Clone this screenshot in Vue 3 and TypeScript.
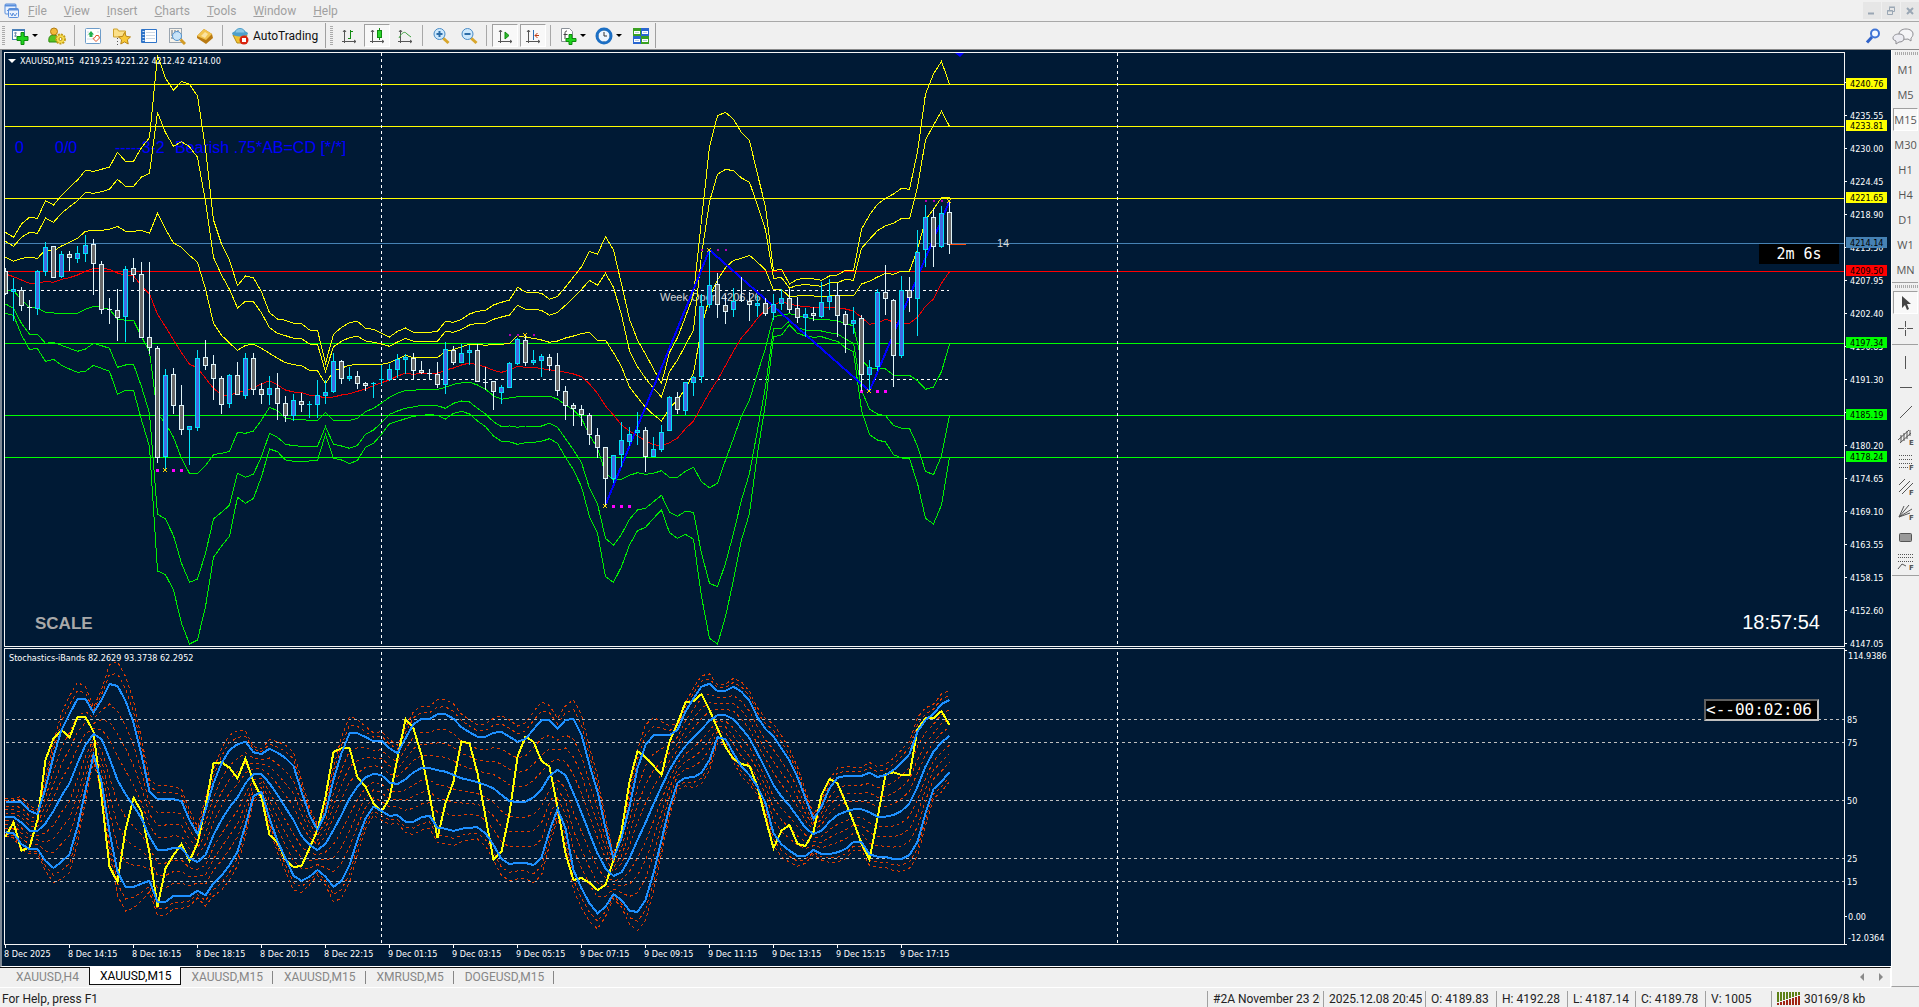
<script setup lang="ts">
interface Candle { x: number; top: number; bottom: number; high: number; low: number; bull: boolean }
interface Tag { price: string; y: number; color: string }

const STEP = 8

const menus = ['File', 'View', 'Insert', 'Charts', 'Tools', 'Window', 'Help']
const frames = ['M1', 'M5', 'M15', 'M30', 'H1', 'H4', 'D1', 'W1', 'MN']
const tabs = ['XAUUSD,H4', 'XAUUSD,M15', 'XAUUSD,M15', 'XAUUSD,M15', 'XMRUSD,M5', 'DOGEUSD,M15']
const times = ['8 Dec 2025', '8 Dec 14:15', '8 Dec 16:15', '8 Dec 18:15', '8 Dec 20:15', '8 Dec 22:15', '9 Dec 01:15',
  '9 Dec 03:15', '9 Dec 05:15', '9 Dec 07:15', '9 Dec 09:15', '9 Dec 11:15', '9 Dec 13:15', '9 Dec 15:15', '9 Dec 17:15']
const status = [
  { text: '#2A November 23 2025', width: 116 },
  { text: '2025.12.08 20:45', width: 102 },
  { text: 'O: 4189.83', width: 71 },
  { text: 'H: 4192.28', width: 71 },
  { text: 'L: 4187.14', width: 68 },
  { text: 'C: 4189.78', width: 70 },
  { text: 'V: 1005', width: 66 },
]
const title = 'XAUUSD,M15\u00a0 4219.25 4221.22 4212.42 4214.00'

const scale = ['', '4235.55', '4230.00', '4224.45', '4218.90', '4213.50', '4207.95', '4202.40', '4196.85', '4191.30',
  '', '4180.20', '4174.65', '4169.10', '4163.55', '4158.15', '4152.60', '4147.05'].map((text, k) => ({ text, y: 30 + 33 * k }))
const tags: Tag[] = [
  { price: '4240.76', y: 32, color: '#ffff00' },
  { price: '4233.81', y: 74, color: '#ffff00' },
  { price: '4221.65', y: 146, color: '#ffff00' },
  { price: '4214.14', y: 191, color: '#4682b4' },
  { price: '4209.50', y: 219, color: '#ff0000' },
  { price: '4197.34', y: 291, color: '#00ff00' },
  { price: '4185.19', y: 363, color: '#00ff00' },
  { price: '4178.24', y: 405, color: '#00ff00' },
]
const levels = [
  { text: '85', y: 70 }, { text: '75', y: 93 }, { text: '50', y: 151 }, { text: '25', y: 209 }, { text: '15', y: 232 },
]

// Candles: high, body top, body bottom, low in thirds of a pixel; 1 marks a rising bar.
const rawCandles = `205 214 282 285 0,234 267 277 363 1,262 271 319 333 0,300 322 326 390 0,210 213 326 345 1,126 141 215 228 1,
138 139 233 234 0,153 162 230 234 1,153 162 173 213 0,138 160 176 189 1,105 135 161 186 1,117 132 191 285 0,183 192 329 342 0,
294 327 331 372 0,267 331 353 423 0,198 207 350 426 1,174 205 224 246 0,186 222 413 414 0,186 411 443 462 0,438 445 773 789 0,
507 525 770 810 1,504 522 617 642 0,555 615 689 705 0,678 679 689 795 1,450 474 683 693 1,420 471 497 510 0,465 492 536 600 0,
528 534 614 642 0,522 525 611 624 1,486 525 584 585 0,459 474 587 597 1,459 474 569 585 0,549 567 584 612 0,528 565 584 615 1,
519 564 611 660 0,588 609 647 666 0,582 600 647 663 1,579 603 614 636 0,603 612 615 654 1,540 585 614 654 1,540 576 587 612 1,
459 483 575 579 1,480 483 536 552 0,501 528 536 543 1,513 528 551 567 0,546 549 557 573 0,546 549 554 594 1,495 538 540 555 1,
492 507 539 543 1,462 477 509 534 1,462 471 479 522 1,459 474 512 540 0,483 510 518 522 0,507 519 524 540 0,486 522 554 564 0,
426 447 554 582 1,438 450 488 495 0,432 459 488 489 1,435 450 458 495 1,432 450 545 546 0,501 546 551 570 0,543 544 575 630 0,
555 561 578 612 1,486 489 563 564 1,414 417 491 495 1,405 420 488 498 0,450 480 488 495 1,462 468 482 531 1,462 471 497 513 0,
459 495 572 588 0,558 573 617 660 0,609 615 626 678 0,615 627 644 678 0,639 645 704 735 0,684 705 743 774 0,741 741 836 918 0,
765 765 836 849 1,666 720 764 801 1,681 702 725 738 1,636 690 698 735 1,681 690 770 816 0,711 747 770 771 1,675 696 749 756 1,
588 591 692 693 1,576 591 629 642 0,546 546 632 645 1,528 531 548 588 1,282 318 530 549 1,150 255 314 324 1,219 252 314 354 0,
285 315 335 372 0,264 303 329 351 1,231 300 303 306 0,276 303 314 363 0,285 309 318 351 1,294 309 342 348 0,282 312 338 360 1,
267 294 311 330 1,267 294 329 339 0,291 324 353 369 0,324 342 353 411 1,321 339 347 363 0,246 306 350 354 1,237 288 305 330 1,
249 285 347 411 0,333 342 374 459 0,321 360 371 402 1,345 354 524 573 0,480 501 524 573 1,267 276 500 513 1,195 276 296 345 0,
297 300 467 561 0,228 270 467 474 1,231 270 293 336 0,90 156 296 408 1,15 51 149 201 1,27 51 140 201 0,18 39 140 144 1,0 36 134 162 0`

const pane = (v: number) => Math.round(v / 3 + 147)
const candles: Candle[] = rawCandles.split(',').map((row, i) => {
  const [h, t, b, l, up] = row.trim().split(' ').map(Number)
  return { x: i * STEP, high: pane(h), low: pane(l), top: pane(t), bottom: pane(b), bull: up === 1 }
})

const nums = (s: string) => s.trim().split(/\s+/).map(Number)
const path = (values: number[], shift: number) =>
  values.map((v, i) => `${i * STEP + 0.5},${(v / 3 + shift).toFixed(1)}`).join(' ')

const yellowBands = [
  `97 112 72 52 55 2 15 -14 -38 -60 -89 -86 -92 -99 -143 -116 -116 -157 -187 -434 -365 -329 -356 -347 -312 -155 60 132 180 257
  228 233 276 338 357 361 370 371 390 391 490 403 382 368 364 385 388 400 411 394 384 397 397 397 394 364 367 358 342 334
  331 315 307 300 262 276 277 280 298 289 261 231 200 154 163 110 150 252 358 420 462 507 550 457 413 350 285 60 -160 -253
  -263 -242 -202 -178 -77 20 212 208 252 238 235 237 241 228 225 211 213 88 45 13 -5 -18 -35 -32 -145 -318 -378 -416 -347`,
  `124 139 112 97 100 54 67 40 20 2 -23 -20 -25 -32 -62 -41 -41 -69 -80 -263 -202 -161 -175 -160 -128 5 172 225 268 324
  304 305 339 383 400 407 415 416 432 433 515 440 424 413 409 423 427 432 439 426 415 424 424 424 424 394 397 388 375 370
  370 358 351 345 316 328 328 331 346 337 316 292 268 241 256 220 262 345 452 500 535 565 591 515 480 435 390 165 5 -77
  -92 -88 -66 -53 15 90 235 233 264 256 254 256 259 249 248 238 241 145 118 92 77 70 55 56 -40 -180 -225 -266 -221`,
  `172 184 175 172 175 150 153 138 127 115 94 91 91 88 79 94 94 91 100 40 88 129 142 166 187 267 370 406 429 451
  436 433 445 460 475 488 494 497 511 512 551 513 504 496 493 493 493 493 488 477 466 473 472 472 472 455 449 440 433 433
  436 433 433 430 407 412 415 420 427 423 414 408 401 397 421 421 458 500 561 592 622 644 663 625 600 566 520 385 290 240
  203 181 175 166 187 210 270 268 291 288 287 288 291 288 286 286 288 252 244 231 220 223 213 213 148 60 28 -7 -6`,
].map(s => path(nums(s), 147))

const redBand = path(nums(`222 230 240 250 250 244 247 238 233 225 214 205 205 208 219 226 228 257 282 343 380 420 458 493 503 535 565 585 588 575
  572 563 552 542 555 570 576 577 586 588 594 591 585 581 574 567 557 548 540 528 520 523 520 520 520 510 504 495 489 494
  501 511 517 510 499 502 502 506 509 513 517 522 530 552 580 618 645 675 693 708 722 734 737 728 714 686 663 620 577 540
  497 453 413 386 355 330 315 305 312 317 320 322 325 322 325 327 333 352 373 369 358 366 370 370 352 319 297 250 215`), 147)

const greenBands = [
  `271 271 300 322 325 337 339 340 340 340 328 319 322 328 357 361 361 410 455 642 670 712 775 820 820 797 764 760 754 697
  700 693 660 622 632 655 658 659 661 661 637 661 661 661 655 635 625 609 592 580 571 571 568 568 568 562 553 549 547 555
  568 587 598 594 590 589 589 589 589 597 615 630 655 705 745 820 839 838 826 818 823 820 812 832 832 814 802 845 863 850
  780 715 648 600 520 445 349 347 341 347 352 357 359 360 363 370 378 480 505 506 507 525 528 526 542 568 561 515 432`,
  `312 325 370 403 403 430 427 436 445 454 447 430 437 445 502 495 493 560 640 943 957 1007 1090 1147 1137 1060 957 937 916 820
  832 822 770 700 712 733 737 739 739 739 680 733 738 745 736 703 690 668 643 633 625 621 616 616 617 625 610 603 606 625
  642 665 680 678 682 678 678 678 670 682 716 750 788 865 912 1015 1036 1003 958 930 925 905 886 937 949 934 937 1060 1150 1160
  1090 1000 900 820 690 560 385 385 363 383 390 391 393 398 402 417 430 570 628 642 647 676 685 685 738 814 824 767 647`,
  `340 346 405 448 446 484 478 496 507 517 514 496 505 514 582 571 571 660 740 1113 1124 1170 1270 1332 1320 1220 1072 1038 1009 892
  910 895 830 747 755 780 784 784 783 781 703 775 780 791 781 742 730 703 671 664 656 649 646 644 646 657 640 634 642 663
  680 708 724 725 733 728 727 724 716 730 772 810 860 950 1000 1130 1147 1100 1035 992 982 955 930 998 1015 1003 1018 1190 1315 1332
  1250 1140 1020 940 760 610 410 405 374 400 408 412 410 418 424 443 456 630 704 720 726 764 774 776 850 955 972 915 772`,
].map(s => path(nums(s), 147))

const upper = nums(`486 486 486 513 522 445 350 270 222 177 177 218 180 132 138 182 248 345 455 477 477 477 484 540 582 510 430 370 330 313
  305 337 342 326 338 354 378 455 525 570 520 420 340 280 280 291 304 302 325 340 295 252 237 237 223 223 236 262 277 290
  290 278 276 290 305 297 268 240 240 267 240 237 285 375 455 565 655 595 500 385 315 286 285 285 270 215 175 140 131 153
  152 140 155 183 232 267 290 325 362 412 475 537 500 445 413 408 408 408 398 411 405 390 368 342 275 240 222 192 180`)
const middle = nums(`530 531 548 572 573 550 513 468 430 370 315 282 297 355 420 462 498 535 590 630 630 624 624 655 666 645 585 540 502 472
  430 402 402 430 465 503 540 587 615 630 612 570 525 475 440 412 402 405 428 432 418 397 384 384 391 395 405 415 420 427
  435 445 465 483 486 485 472 448 408 390 405 460 518 580 640 685 708 697 655 600 548 492 440 390 350 318 293 268 242 226
  226 238 265 295 340 387 435 470 497 530 564 582 572 545 525 515 508 508 517 530 530 525 513 490 440 380 335 307 288`)
const lower = nums(`577 580 613 627 627 663 684 665 643 560 450 345 425 575 695 741 741 731 722 786 786 768 768 768 752 766 730 707 675 635
  555 468 456 535 603 655 707 722 710 690 710 741 723 675 600 535 500 513 527 526 545 545 532 527 563 566 573 566 563 562
  580 615 657 672 669 669 675 653 572 507 565 690 745 790 820 800 762 780 812 816 780 700 600 500 428 413 412 398 360 292
  297 340 380 405 440 490 580 613 632 648 648 630 642 642 637 627 606 606 643 650 651 657 657 645 605 520 447 425 396`)
const signal = path(nums(`590 547 632 622 540 360 295 270 293 231 231 275 470 680 726 570 473 515 640 800 685 645 612 663 610 500 370 367 383 415
  356 425 472 585 607 660 681 678 625 570 470 336 325 324 412 440 490 515 475 355 237 265 345 465 594 490 425 304 310 400
  530 660 635 520 350 290 305 363 380 500 640 720 714 728 750 735 660 575 425 333 352 377 405 305 250 187 184 162 210 265
  320 357 372 378 440 535 625 572 555 612 618 575 465 417 430 487 545 610 658 535 403 397 405 405 268 235 235 213 255`), -9)

const blueBands = [upper, middle, lower].map(v => path(v, -9))
const ratios = [0.25, 0.49, 0.73, 1.13, 1.26]
const dashedBands = [upper, lower].flatMap(side =>
  ratios.map(k => path(middle.map((m, i) => m + (side[i] - m) * k), -9)))

// Swing markers: centre of the cross, offsets of its neighbouring dots, and whether it marks a low.
const swings = [
  { x: 160, y: 417, dots: [-8, 8, 16], low: true },
  { x: 600, y: 453, dots: [8, 16, 24], low: true },
  { x: 520, y: 282, dots: [-16, -8, 8], low: false },
  { x: 704, y: 197, dots: [-8, 8, 16], low: false },
  { x: 864, y: 338, dots: [-8, 8, 16], low: true },
  { x: 944, y: 148, dots: [-24, -16, -8], low: false },
]
</script>

<template>
  <div class="terminal">
    <header class="menubar">
      <svg class="app-icon" width="16" height="16" viewBox="0 0 16 16">
        <rect x="1" y="1" width="11" height="10" rx="1" fill="#eaf2fd" stroke="#5a8fdc" />
        <path d="M1 2.500h11" stroke="#5a8fdc" stroke-width="2" />
        <path d="M3 8l2-2 1 2 2-3" fill="none" stroke="#5a8fdc" />
        <rect x="4.500" y="5.500" width="10" height="9" rx="1" fill="#eaf2fd" stroke="#5a8fdc" />
        <path d="M5 6.500h9" stroke="#5a8fdc" stroke-width="2" />
        <path d="M6 10l2 3 1-3 2 3 2-3" fill="none" stroke="#5a8fdc" />
      </svg>
      <nav class="menus">
        <button v-for="m in menus" :key="m" class="menu"><u>{{ m[0] }}</u>{{ m.slice(1) }}</button>
      </nav>
      <div class="win-buttons">
        <button aria-label="Minimize"><svg width="17" height="17" viewBox="0 0 17 17"><path d="M5 11.500h6" stroke="#9aa7b4" stroke-width="2" /></svg></button>
        <button aria-label="Restore"><svg width="17" height="17" viewBox="0 0 17 17"><path d="M7.500 8V5.500h5v4H11M7 5h6" fill="none" stroke="#9aa7b4" /><path d="M5.500 8.500h5v4h-5zM5 9h6" fill="none" stroke="#9aa7b4" /></svg></button>
        <button aria-label="Close"><svg width="17" height="17" viewBox="0 0 17 17"><path d="M6 6l6 6M12 6l-6 6" stroke="#9aa7b4" stroke-width="2" /></svg></button>
      </div>
    </header>

    <div class="toolbar">
      <i class="grip"></i>
      <button class="tool drop" aria-label="New chart">
        <svg width="18" height="18" viewBox="0 0 18 18">
          <rect x="1.500" y="2.500" width="12" height="10" fill="#fff" stroke="#4a80b8" /><path d="M1 3h13" stroke="#4a80b8" stroke-width="2" />
          <path d="M4.500 5v5M3 6h3M3 9h3" stroke="#7a95b0" /><path d="M10 5.500h3v4h4v4h-4v4h-3v-4H6v-4h4z" fill="#1fd21f" stroke="#0c8a0c" />
        </svg>
        <i class="caret"></i>
      </button>
      <button class="tool" aria-label="Profiles">
        <svg width="18" height="18" viewBox="0 0 18 18">
          <path d="M1 15c-1-6 2-7 5-7s5 2 4 7z" fill="#58c322" stroke="#2f8a12" /><circle cx="6" cy="4.500" r="3.500" fill="#f3b93a" stroke="#b07b12" />
          <circle cx="12.500" cy="12" r="4.500" fill="#f7dc4c" stroke="#c39c18" stroke-width="2" stroke-dasharray="2 1" /><circle cx="12.500" cy="12" r="3.500" fill="#f7dc4c" /><circle cx="12.500" cy="12" r="1.500" fill="#fff" stroke="#b28a12" />
        </svg>
      </button>
      <i class="sep"></i>
      <button class="tool" aria-label="Market watch">
        <svg width="18" height="18" viewBox="0 0 18 18">
          <rect x="1.500" y="1.500" width="15" height="15" rx="1" fill="#fff" stroke="#6d9cc9" /><path d="M3 5h2M3 8h1M3 12h7M13 5h2" stroke="#d4dde6" />
          <path d="M7 4l3 3.500H8.500V10h-3V7.500H4z" fill="#22b04c" /><path d="M12 8.500h2.500l1 2.500-3.500 3.500-3-3 2-1z" fill="#fff" stroke="#e2552a" />
        </svg>
      </button>
      <button class="tool" aria-label="Navigator">
        <svg width="19" height="18" viewBox="0 0 19 18">
          <path d="M1.500 2h4l1 2h7v6h-12z" fill="#fbe08a" stroke="#cda12c" /><path d="M5.500 11v7" stroke="#555" stroke-dasharray="1 2" />
          <path d="M12.500 5.500l1.800 3.900 4.200.5-3.100 2.900.8 4.200-3.700-2.100L8.800 17l.8-4.200-3.100-2.900 4.200-.5z" fill="#f8c938" stroke="#b9861a" />
        </svg>
      </button>
      <button class="tool" aria-label="Terminal">
        <svg width="18" height="18" viewBox="0 0 18 18">
          <rect x="1" y="2" width="16" height="14" rx="1" fill="#2f74c8" /><rect x="5" y="3" width="11" height="12" fill="#fff" />
          <path d="M6 5.500h9M6 8.500h9M6 11.500h9" stroke="#cdd8e4" /><path d="M3.500 4v10" stroke="#cfe2f8" stroke-width="2" stroke-dasharray="1 2" />
        </svg>
      </button>
      <button class="tool" aria-label="Strategy tester">
        <svg width="18" height="18" viewBox="0 0 18 18">
          <rect x="1.500" y="1.500" width="12" height="14" fill="#f7f3ea" stroke="#9aa5b0" /><path d="M4 3v6M7 3v4M10 3v3M3 11h3" stroke="#5e6d7c" />
          <circle cx="9" cy="9" r="4.500" fill="#bfe0fa" fill-opacity=".85" stroke="#5393cf" /><path d="M12.500 12.500l4.500 4.500" stroke="#d29b26" stroke-width="3" />
        </svg>
      </button>
      <button class="tool" aria-label="New order">
        <svg width="18" height="18" viewBox="0 0 18 18">
          <path d="M1 9l7-7 8 5 1 4-7 6-9-6z" fill="#b97a12" /><path d="M1 9l7-7 8 5-6 6z" fill="#f2c44e" /><path d="M5 9l4-4 3 2-3 4z" fill="#fbe3a0" />
        </svg>
      </button>
      <i class="sep"></i>
      <button class="tool auto">
        <svg width="18" height="18" viewBox="0 0 18 18">
          <path d="M2 8h14l-4 8H6z" fill="#f0c330" stroke="#b48a18" /><ellipse cx="9" cy="6.500" rx="8" ry="3" fill="#4e9fca" /><path d="M4 6c0-6 10-6 10 0z" fill="#8cc8e6" stroke="#4e9fca" />
          <circle cx="13" cy="13" r="4.500" fill="#d9230f" /><rect x="11" y="11" width="4" height="4" fill="#fff" />
        </svg>
        AutoTrading
      </button>
      <i class="end"></i>
      <i class="grip"></i>
      <button class="tool" aria-label="Bar chart">
        <svg width="18" height="18" viewBox="0 0 18 18"><path d="M4.500 3v13M2 14.500h14M3 5l1.500-2L6 5M14 13l2 1.500-2 1.500" fill="none" stroke="#555" /><path d="M10.500 3v9M10 4.500h3M8 11.500h3" stroke="#118a11" fill="none" /></svg>
      </button>
      <button class="tool" aria-label="Candlesticks">
        <span class="pressed"><svg width="18" height="18" viewBox="0 0 18 18"><path d="M4.500 3v13M2 14.500h14M3 5l1.500-2L6 5M14 13l2 1.500-2 1.500" fill="none" stroke="#555" /><path d="M11.500 1v12" stroke="#118a11" /><rect x="9.500" y="3.500" width="4" height="7" fill="#2bd52b" stroke="#118a11" /></svg></span>
      </button>
      <button class="tool" aria-label="Line chart">
        <svg width="18" height="18" viewBox="0 0 18 18"><path d="M4.500 3v13M2 14.500h14M3 5l1.500-2L6 5M14 13l2 1.500-2 1.500" fill="none" stroke="#555" /><path d="M3 11c3-6 6-7 8-4l4 3" fill="none" stroke="#3fa03f" /></svg>
      </button>
      <i class="sep"></i>
      <button class="tool" aria-label="Zoom in">
        <svg width="18" height="18" viewBox="0 0 18 18"><path d="M11 11l5.500 5" stroke="#d8a62c" stroke-width="3" /><circle cx="7.500" cy="7" r="5.500" fill="#cde8fc" stroke="#4a8cc6" /><path d="M4.500 7h6M7.500 4v6" stroke="#2d6da8" stroke-width="2" /></svg>
      </button>
      <button class="tool" aria-label="Zoom out">
        <svg width="18" height="18" viewBox="0 0 18 18"><path d="M11 11l5.500 5" stroke="#d8a62c" stroke-width="3" /><circle cx="7.500" cy="7" r="5.500" fill="#cde8fc" stroke="#4a8cc6" /><path d="M4.500 7h6" stroke="#2d6da8" stroke-width="2" /></svg>
      </button>
      <i class="sep"></i>
      <button class="tool" aria-label="Auto scroll">
        <span class="pressed"><svg width="18" height="18" viewBox="0 0 18 18"><path d="M4.500 3v13M2 14.500h14M3 5l1.500-2L6 5M14 13l2 1.500-2 1.500" fill="none" stroke="#555" /><path d="M9 5v7l4-3.500z" fill="#2cba2c" stroke="#118a11" /></svg></span>
      </button>
      <button class="tool" aria-label="Chart shift">
        <span class="pressed"><svg width="18" height="18" viewBox="0 0 18 18"><path d="M4.500 3v13M2 14.500h14M3 5l1.500-2L6 5M14 13l2 1.500-2 1.500" fill="none" stroke="#555" /><path d="M9.500 3v10" stroke="#2a6fb4" /><path d="M11 8.500h4M13.500 6l-2.500 2.500 2.500 2.500" fill="none" stroke="#c03c12" /></svg></span>
      </button>
      <i class="sep"></i>
      <button class="tool drop" aria-label="Indicators">
        <svg width="18" height="18" viewBox="0 0 18 18"><path d="M2.500 1.500h8l3 3v10h-11z" fill="#fff" stroke="#8b9199" /><path d="M8 4c-2 0-2 1-2 3v5M4.500 7.500h4" fill="none" stroke="#444" /><path d="M10 7.500h3v4h4v3h-4v3h-3v-3H7v-3h3z" fill="#1fd21f" stroke="#0c8a0c" /></svg>
        <i class="caret"></i>
      </button>
      <button class="tool drop" aria-label="Periods">
        <svg width="18" height="18" viewBox="0 0 18 18"><circle cx="9" cy="9" r="7" fill="#eef6ff" stroke="#1c6fc4" stroke-width="3" /><path d="M9 5v4h3" fill="none" stroke="#333" /><path d="M9 3v1M9 14v1M3 9h1M14 9h1" stroke="#678" /></svg>
        <i class="caret"></i>
      </button>
      <button class="tool" aria-label="Templates">
        <svg width="18" height="18" viewBox="0 0 18 18"><rect x="1" y="1" width="8" height="8" fill="#3aa022" /><rect x="9" y="1" width="8" height="8" fill="#2a66d0" /><rect x="1" y="9" width="8" height="8" fill="#2a66d0" /><rect x="9" y="9" width="8" height="8" fill="#3aa022" /><path d="M2 5.500h6M10 5.500h6M2 13.500h6M10 13.500h6" stroke="#fff" stroke-width="3" /><path d="M3 5.500h4M11 5.500h4M3 13.500h4M11 13.500h4" stroke="#b8cbe0" /></svg>
      </button>
      <i class="end"></i>
      <div class="spacer"></div>
      <button class="tool" aria-label="Search">
        <svg width="18" height="18" viewBox="0 0 18 18"><path d="M3 15.500l5-5.500" stroke="#2f62c9" stroke-width="3" /><circle cx="11" cy="6.500" r="4" fill="#f4f9ff" stroke="#3f74d6" stroke-width="2" /></svg>
      </button>
      <button class="tool chat" aria-label="Chat">
        <svg width="24" height="18" viewBox="0 0 24 18"><path d="M15 2c4 0 7 2 7 5 0 2-1 3-2 4v3l-3-2c-6 1-9-1-9-5 0-3 3-5 7-5z" fill="#f5f5f7" stroke="#8d8d92" /><path d="M8 7c3 0 5 1 5 4s-2 4-5 4l-3 2v-3c-2-1-3-1-3-3s2-4 6-4z" fill="#ececf2" stroke="#8d8d92" /></svg>
      </button>
    </div>

    <div class="body">
      <div class="workspace">
        <main class="chart">
          <div class="plots">
            <section class="pane price">
              <svg class="canvas" width="100%" height="593" shape-rendering="crispEdges">
                <text class="blue" x="10" y="100">0</text>
                <text class="blue" x="50" y="100">0/0</text>
                <text class="blue" x="110" y="100">-----3-2</text>
                <text class="blue" x="170" y="100">Bearish .75*AB=CD [*/*]</text>
                <text class="note" x="655" y="248">Week Open 4206.26</text>
                <line v-for="t in tags" :key="t.price" x1="0" x2="100%" :y1="t.y - 0.5" :y2="t.y - 0.5" :stroke="t.color" />
                <path class="dash" d="M376.500 0V593M1112.500 0V593" />
                <path class="dash" d="M12 237.500H944M388 326.500H944" />
                <polyline v-for="(p, i) in yellowBands" :key="'y' + i" :points="p" fill="none" stroke="#ffff00" />
                <polyline v-for="(p, i) in greenBands" :key="'g' + i" :points="p" fill="none" stroke="#00f000" />
                <polyline :points="redBand" fill="none" stroke="#f00000" />
                <polyline points="600.500,452 704.500,197 864.500,338 944.500,148" fill="none" stroke="#0000ff" stroke-width="2" />
                <g v-for="(s, i) in swings" :key="'s' + i">
                  <rect v-for="d in s.dots" :key="d" :x="s.x + d - (s.low ? 1 : 0)" :y="s.y - 1" :width="s.low ? 3 : 2" :height="s.low ? 3 : 2" :fill="s.low ? '#ff00ff' : '#b000b0'" />
                </g>
                <g v-for="c in candles" :key="c.x" :stroke="c.bull ? '#00e4f8' : '#e0f4f8'">
                  <line :x1="c.x + 0.5" :x2="c.x + 0.5" :y1="c.high" :y2="c.low" />
                  <line v-if="c.bottom - c.top < 3" :x1="c.x - 2" :x2="c.x + 3" :y1="c.top + 0.5" :y2="c.top + 0.5" />
                  <rect v-else :x="c.x - 1.5" :y="c.top + 0.5" width="4" :height="c.bottom - c.top - 1" :fill="c.bull ? '#4169e1' : '#696969'" />
                </g>
                <path v-for="(s, i) in swings" :key="'x' + i" :d="`M${s.x - 2} ${s.y - 2}l4 4m0 -4l-4 4`" stroke="#ffd800" />
                <path d="M945 191.500h16" stroke="#ff4500" />
                <path d="M950 0h9l-4 4z" fill="#0000ff" shape-rendering="auto" />
                <text class="note" x="992" y="194">14</text>
                <path d="M3 6h8l-4 4z" fill="#fff" shape-rendering="auto" />
                <text class="tiny" x="15" y="11">{{ title }}</text>
                <text class="scale-mark" x="30" y="576">SCALE</text>
              </svg>
              <div class="bar-timer">2m 6s</div>
              <div class="clock">18:57:54</div>
            </section>

            <section class="pane stochastic">
              <svg class="canvas" width="100%" height="295" shape-rendering="crispEdges">
                <line v-for="l in levels" :key="l.text" class="level" x1="1" x2="100%" :y1="l.y + 0.5" :y2="l.y + 0.5" />
                <path class="dash" d="M376.500 3V295M1112.500 3V295" />
                <polyline v-for="(p, i) in dashedBands" :key="'d' + i" :points="p" fill="none" stroke="#e03c00" stroke-dasharray="3 3" />
                <polyline :points="signal" fill="none" stroke="#ffff00" stroke-width="2" />
                <polyline v-for="(p, i) in blueBands" :key="'b' + i" :points="p" fill="none" stroke="#1e90ff" stroke-width="2" />
                <text class="tiny" x="4" y="12">Stochastics-iBands 82.2629 93.3738 62.2952</text>
              </svg>
              <div class="countdown">&lt;--00:02:06</div>
            </section>

            <div class="times">
              <span v-for="t in times" :key="t" class="time">{{ t }}</span>
            </div>
          </div>

          <svg class="scale" width="46" height="914">
            <g shape-rendering="crispEdges" stroke="#fff">
              <line v-for="s in scale" :key="s.y" x1="0" x2="2" :y1="s.y + 0.5" :y2="s.y + 0.5" />
              <path d="M0 598.500h2M0 864.500h2M0 892.500h2" />
            </g>
            <text v-for="s in scale" :key="'t' + s.y" class="tiny" x="5" :y="s.y + 4">{{ s.text }}</text>
            <text class="tiny" x="3" y="607">114.9386</text>
            <text v-for="l in levels" :key="l.text" class="tiny" x="2" :y="l.y + 601">{{ l.text }}</text>
            <text class="tiny" x="3" y="868">0.00</text>
            <text class="tiny" x="3" y="889">-12.0364</text>
            <g v-for="t in tags" :key="t.price">
              <rect x="1" :y="t.y - 6" width="41" height="11" :fill="t.color" />
              <text class="tiny tag" x="5" :y="t.y + 3">{{ t.price }}</text>
            </g>
          </svg>
        </main>

        <div class="tabs">
          <button v-for="(t, i) in tabs" :key="i" class="tab" :class="{ active: i === 1 }">{{ t }}</button>
          <div class="spacer"></div>
          <button class="arrow" aria-label="Previous"><svg width="6" height="8"><path d="M5 0v8L1 4z" fill="#8a8a8a" /></svg></button>
          <button class="arrow" aria-label="Next"><svg width="6" height="8"><path d="M1 0v8l4-4z" fill="#8a8a8a" /></svg></button>
        </div>
      </div>

      <aside class="side">
        <div class="side-tools">
          <i class="side-grip"></i>
          <button v-for="f in frames" :key="f" class="side-button" :class="{ on: f === 'M15' }">{{ f }}</button>
          <i class="side-line"></i>
          <i class="side-grip"></i>
          <button class="side-button on" aria-label="Cursor"><svg width="18" height="18" viewBox="0 0 18 18"><path d="M5 2v12l3-3 2 5 2-1-2-5h4z" fill="#444" /></svg></button>
          <button class="side-button" aria-label="Crosshair"><svg width="18" height="18" viewBox="0 0 18 18"><path d="M8.500 2v6M8.500 11v6M1 9.500h6M10 9.500h6M8 9.500h1" stroke="#555" /></svg></button>
          <i class="side-line spaced"></i>
          <button class="side-button" aria-label="Vertical line"><svg width="18" height="18" viewBox="0 0 18 18"><path d="M8.500 3v13" stroke="#555" /></svg></button>
          <button class="side-button" aria-label="Horizontal line"><svg width="18" height="18" viewBox="0 0 18 18"><path d="M3 9.500h12" stroke="#555" /></svg></button>
          <button class="side-button" aria-label="Trendline"><svg width="18" height="18" viewBox="0 0 18 18"><path d="M3 15L15 3" stroke="#555" /></svg></button>
          <button class="side-button" aria-label="Equidistant channel"><svg width="18" height="18" viewBox="0 0 18 18"><path d="M1 12L12 2M3 15L14 5M4 7v7M7 5v8M10 3v8M13 2v6" stroke="#555" /><text x="12" y="17">E</text></svg></button>
          <button class="side-button" aria-label="Fibonacci retracement"><svg width="18" height="18" viewBox="0 0 18 18"><path d="M2 2.500h13M2 6.500h13M2 10.500h13M2 14.500h9" stroke="#555" stroke-dasharray="1 1" /><text x="12" y="17">F</text></svg></button>
          <button class="side-button" aria-label="Fibonacci channel"><svg width="18" height="18" viewBox="0 0 18 18"><path d="M2 7L8 1M2 14L13 3M5 16L16 5" stroke="#555" /><text x="12" y="17">F</text></svg></button>
          <button class="side-button" aria-label="Fibonacci fan"><svg width="18" height="18" viewBox="0 0 18 18"><path d="M2 14L7 3M2 14L12 2M2 14L15 6M2 14l11-4" stroke="#555" /><text x="12" y="17">F</text></svg></button>
          <button class="side-button" aria-label="Rectangle"><svg width="18" height="18" viewBox="0 0 18 18"><rect x="2.500" y="5.500" width="12" height="8" rx="1" fill="#999" stroke="#555" /></svg></button>
          <button class="side-button" aria-label="Expansion"><svg width="18" height="18" viewBox="0 0 18 18"><path d="M1 1.500h15M1 4.500h15M1 8.500h15" stroke="#555" stroke-dasharray="1 1" /><path d="M1 16l4-5 4 2" fill="none" stroke="#555" /><text x="12" y="17">F</text></svg></button>
        </div>
      </aside>
    </div>

    <footer class="statusbar">
      <span class="help">For Help, press F1</span>
      <span v-for="s in status" :key="s.text" class="field" :style="{ width: s.width + 'px' }"><span class="clip">{{ s.text }}</span></span>
      <span class="field traffic">
        <svg width="24" height="13" shape-rendering="crispEdges">
          <g v-for="n in 8" :key="n">
            <rect :x="(n - 1) * 3" y="0" width="2" :height="11 - n" fill="#5d8016" />
            <rect :x="(n - 1) * 3" :y="12 - n" width="2" :height="n + 1" fill="#a02414" />
          </g>
        </svg>
        30169/8 kb
      </span>
    </footer>
  </div>
</template>

<style>
body { margin: 0; background: #f0f0f0; }
</style>

<style scoped>
.terminal { display: flex; flex-direction: column; min-height: 100vh; overflow: hidden; background: #f0f0f0; color: #111; font-family: Roboto, "Open Sans", sans-serif; font-size: 12px; line-height: 16px; }
button { margin: 0; padding: 0; border: 0; background: none; color: inherit; font: inherit; }
svg { display: block; flex: none; }
.spacer { flex: 1; }

.menubar { display: flex; align-items: center; height: 21px; border-bottom: 1px solid #a8a8a8; color: #a0a0a0; }
.app-icon { margin-left: 4px; }
.menus { display: flex; flex: 1; gap: 17px; margin-left: 8px; }
.win-buttons { display: flex; gap: 1px; }
.win-buttons button { width: 18px; height: 17px; background: #e6e6e6; }

.toolbar { display: flex; align-items: center; height: 27px; border-bottom: 1px solid #8a8a8a; }
.grip { width: 3px; height: 19px; margin: 0 2px; background: repeating-linear-gradient(#aaa 0 1px, #f0f0f0 1px 2px); }
.tool { display: flex; flex: none; align-items: center; justify-content: center; width: 28px; height: 26px; }
.tool.drop { justify-content: flex-start; gap: 3px; width: 36px; padding-left: 4px; box-sizing: border-box; }
.tool.auto { justify-content: flex-start; gap: 4px; width: 98px; padding-left: 4px; box-sizing: border-box; }
.tool.chat { width: 32px; }
.pressed { display: flex; align-items: center; justify-content: center; width: 24px; height: 21px; border: 1px solid #fff; border-top-color: #a0a0a0; border-left-color: #a0a0a0; background: #f8f8f8; }
.caret { border: 3px solid transparent; border-top-color: #000; border-bottom: 0; }
.sep { flex: none; width: 1px; height: 21px; margin: 0 4px 0 3px; background: #a8a8a8; }
.end { flex: none; width: 1px; height: 25px; margin-right: 2px; background: #a0a0a0; }

.body { display: flex; flex: 1; }
.workspace { display: flex; flex: 1; flex-direction: column; min-width: 0; }
.chart { display: flex; padding-top: 2px; border-left: 2px solid #7e8894; border-bottom: 1px solid #fff; background: #001a35; }
.plots { flex: 1; min-width: 0; }
.pane { position: relative; margin-left: 2px; border: 1px solid #f4f4f4; }
.stochastic { margin-top: 1px; }
.canvas { overflow: hidden; }
.dash { fill: none; stroke: #fff; stroke-dasharray: 3 3; }
.level { stroke: #c0c0c0; stroke-dasharray: 3 3; }
.tiny { fill: #fff; font-family: "DejaVu Sans Condensed", "DejaVu Sans", sans-serif; font-size: 9px; }
.tiny.tag { fill: #000; }
.blue { fill: #0000ff; font-family: "Liberation Sans", Arial, sans-serif; font-size: 16px; }
.note { fill: #d8d8d8; font-family: "Liberation Sans", Arial, sans-serif; font-size: 11px; }
.scale-mark { fill: #a9a9a9; font-family: "Liberation Sans", Arial, sans-serif; font-size: 17px; font-weight: bold; }
.bar-timer { position: absolute; top: 191px; right: 5px; width: 80px; background: #000; color: #fff; font-family: "DejaVu Sans Mono", monospace; font-size: 15px; line-height: 20px; text-align: center; }
.clock { position: absolute; right: 24px; bottom: 12px; color: #fff; font-family: "Liberation Sans", Arial, sans-serif; font-size: 20px; line-height: 24px; }
.countdown { position: absolute; top: 50px; right: 25px; width: 111px; border: 2px solid #c0c0c0; border-top-color: #606060; border-left-color: #606060; background: #000; color: #fff; font-family: "DejaVu Sans Mono", monospace; font-size: 16px; line-height: 18px; }
.times { display: flex; height: 21px; margin-left: 2px; overflow: hidden; }
.time { position: relative; flex: none; width: 64px; color: #fff; font-family: "DejaVu Sans Condensed", "DejaVu Sans", sans-serif; font-size: 9px; line-height: 19px; }
.time::before { position: absolute; top: 0; left: 1px; width: 1px; height: 3px; background: #fff; content: ""; }

.tabs { display: flex; height: 19px; padding-left: 5px; border-top: 1px solid #111; border-right: 1px solid #fff; border-bottom: 1px solid #fff; }
.tab { position: relative; height: 17px; padding: 0 10px 0 11px; color: #868686; }
.tab + .tab::after { position: absolute; top: 3px; right: 0; width: 1px; height: 13px; background: #868686; content: ""; }
.tab.active { height: 18px; margin-top: -1px; padding: 1px 9px 0 10px; border: 1px solid #111; border-top: 0; background: #fff; color: #000; }
.tab.active::after { display: none; }
.tab.active + .tab { padding-left: 10px; }
.arrow { display: flex; align-items: center; justify-content: center; width: 19px; height: 17px; }

.side { width: 27px; margin-bottom: 1px; border-bottom: 1px solid #a0a0a0; border-left: 1px solid #fff; }
.side-tools { display: flex; flex-direction: column; align-items: flex-start; padding-bottom: 1px; border-bottom: 1px solid #a0a0a0; }
.side-grip { width: 23px; height: 3px; margin: 2px 0 2px 3px; background: repeating-linear-gradient(90deg, #aaa 0 1px, #f0f0f0 1px 2px); }
.side-button { display: flex; align-items: center; justify-content: center; width: 25px; height: 23px; margin: 1px 0 1px 1px; color: #555; font-family: "Open Sans", sans-serif; font-size: 11px; }
.side-button.on { box-sizing: border-box; border: 1px solid #fff; border-top-color: #a0a0a0; border-left-color: #a0a0a0; background: #f8f8f8; }
.side-line { width: 26px; height: 1px; background: #a0a0a0; }
.side-line.spaced { margin: 4px 0; }
.side-button text { fill: #555; font-family: "DejaVu Sans", sans-serif; font-size: 7px; font-weight: bold; }

.statusbar { display: flex; align-items: center; height: 17px; padding-top: 2px; color: #222; }
.help { flex: 1; padding-left: 2px; }
.field { box-sizing: border-box; flex: none; padding: 0 3px 0 5px; border-left: 1px solid #a0a0a0; white-space: nowrap; }
.clip { display: block; overflow: hidden; }
.traffic { display: flex; align-items: center; gap: 3px; width: 148px; }
</style>
